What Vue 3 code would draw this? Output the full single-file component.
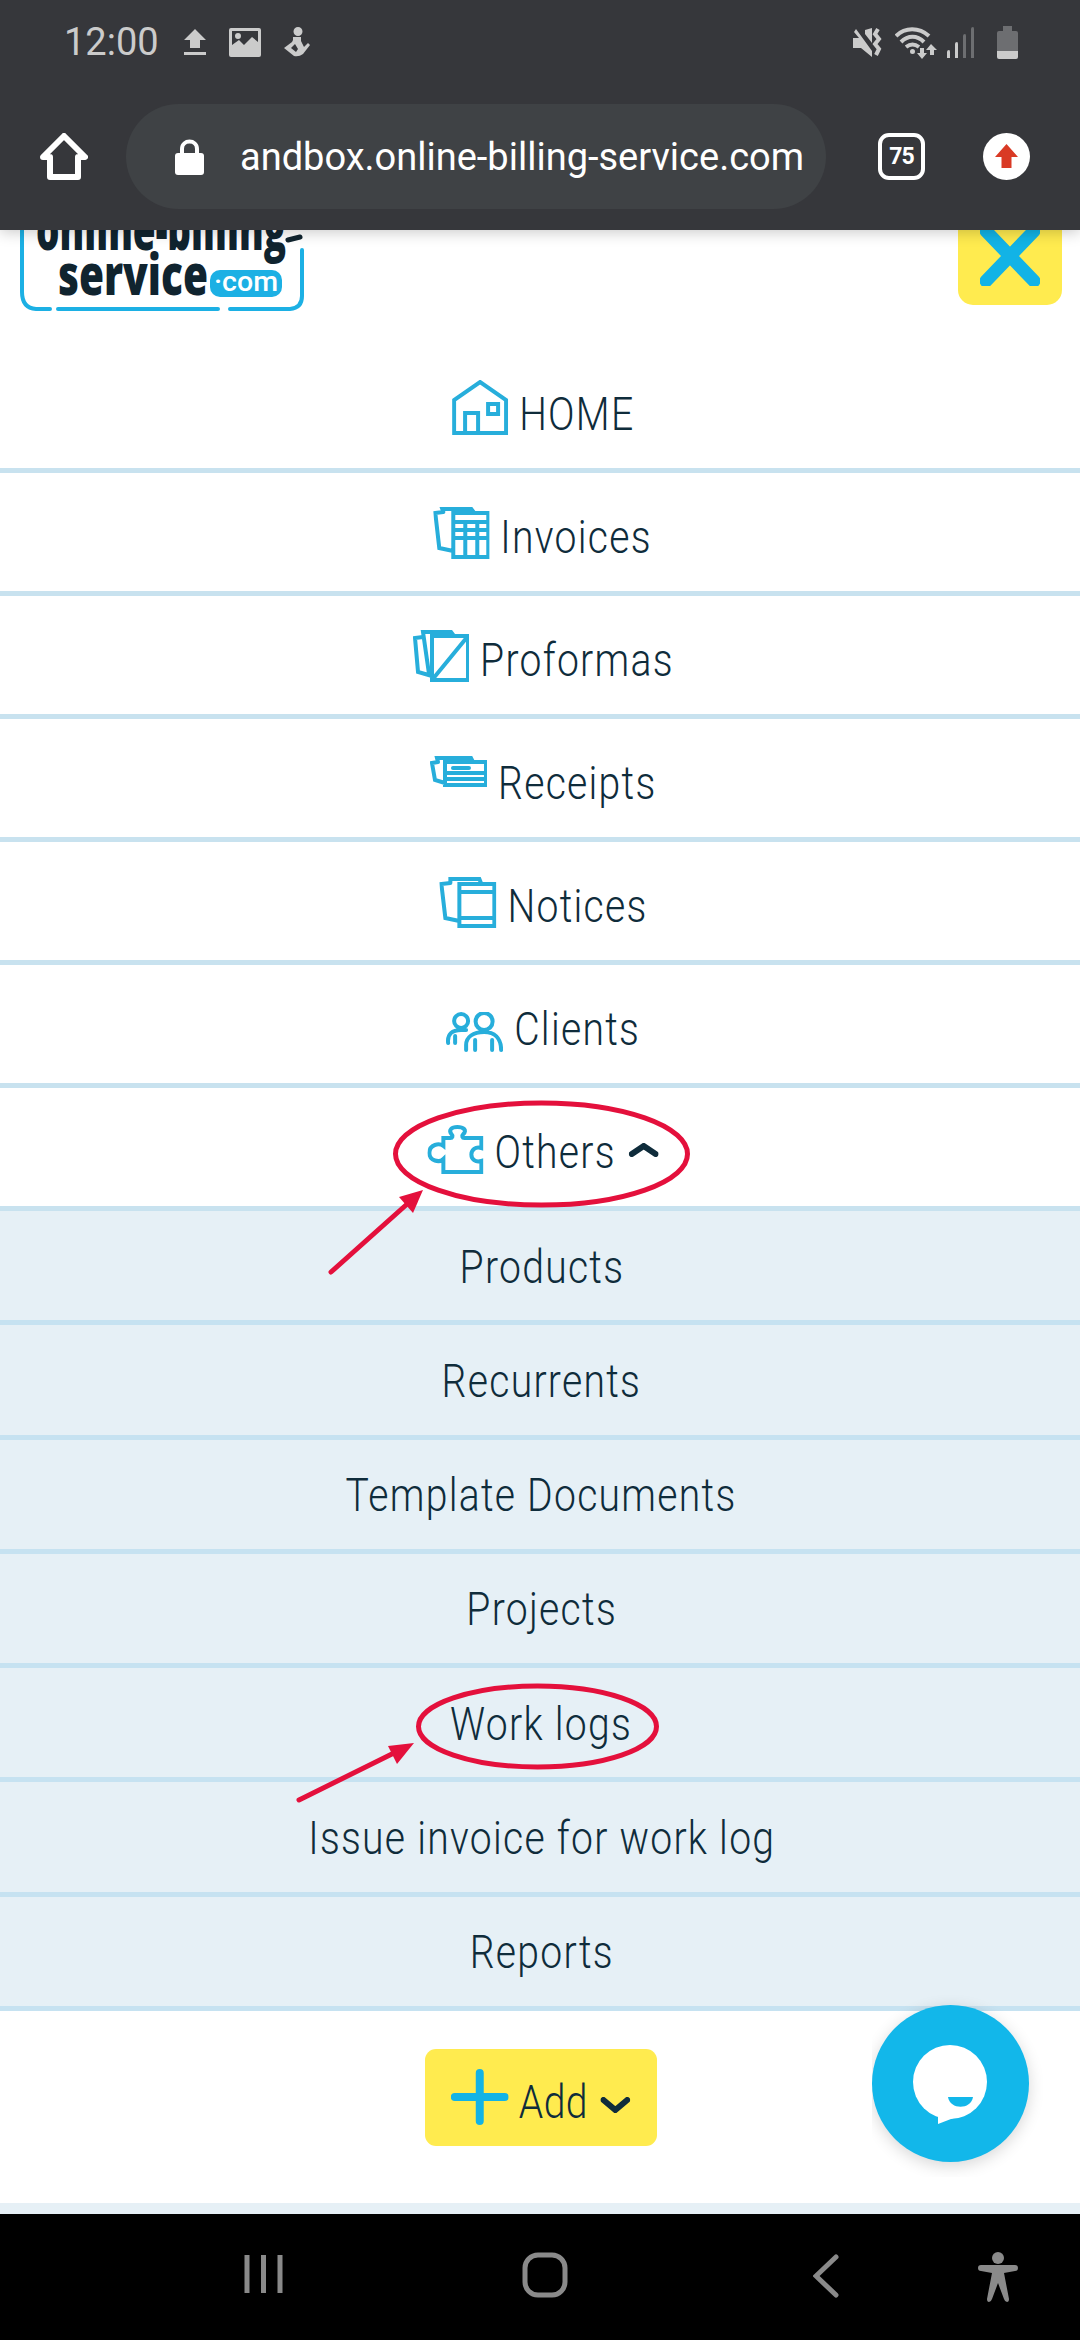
<template>
  <div class="page">
    <header class="browser">
      <div class="status">
        <span class="time">12:00</span>
        <svg class="st st-up" viewBox="0 0 22 26"><path d="M11 0 22 11H16V19H6V11H0ZM0 23H22V26H0Z" /></svg>
        <svg class="st st-img" viewBox="0 0 32 29">
          <path fill-rule="evenodd" d="M2 0H30Q32 0 32 2V27Q32 29 30 29H2Q0 29 0 27V2Q0 0 2 0ZM3 3V17L10 12 15 17 23 9 29 14V3ZM9 5A3 3 0 1 1 9 11 3 3 0 1 1 9 5Z" />
        </svg>
        <svg class="st st-fig" viewBox="0 0 27 30">
          <path d="M15 0A4.500 4.500 0 1 1 15 9 4.500 4.500 0 1 1 15 0ZM10 10H18V14L21 20 25 16 27 18 20 27Q16 30 11 29L1 21 9 15 10 13ZM8 21 13 25 15 22 12 17Z" />
        </svg>
        <span class="status-right">
          <svg class="st st-mute" viewBox="0 0 31 31">
            <path d="M1 11H7L2 5 4 2 20 24V30L9 21H1ZM13 3 20 1V16L13 7Z" />
            <path class="st-line" d="M26 2 23 7 27 12 23 17 27 22 24 28" />
          </svg>
          <svg class="st st-wifi" viewBox="0 0 42 33">
            <path class="st-line" d="M1 10C10 1 24 1 34 10M6 16C13 9 22 9 29 16M11 21C15 18 20 18 24 21" />
            <path d="M17.500 23A2.500 2.500 0 1 1 17.500 28 2.500 2.500 0 1 1 17.500 23ZM25 22H29V27H32L27 33 22 27H25ZM36 18 42 24H39V29H35V24H31Z" />
          </svg>
          <svg class="st st-sig" viewBox="0 0 28 31">
            <path d="M0 25Q0 23 2 23 3 23 3 25V31H0Z" />
            <path d="M8 17Q8 15 10 15 11 15 11 17V31H8Z" />
            <path class="dim" d="M16 9Q16 7 18 7 19 7 19 9V31H16Z" />
            <path class="dim" d="M24 2Q24 0 26 0 27 0 27 2V31H24Z" />
          </svg>
          <svg class="st st-bat" viewBox="0 0 21 33">
            <path class="dim" d="M6 0H15V5H19Q21 5 21 7V25H0V7Q0 5 2 5H6Z" />
            <path d="M0 25H21V31Q21 33 19 33H2Q0 33 0 31Z" />
          </svg>
        </span>
      </div>
      <div class="toolbar">
        <svg class="tb-home" viewBox="0 0 48 47">
          <path d="M24 3 45 24H38V44H10V24H3Z" />
        </svg>
        <div class="url">
          <svg class="lock" viewBox="0 0 29 36">
            <path class="lock-body" d="M3 14H26Q29 14 29 17V33Q29 36 26 36H3Q0 36 0 33V17Q0 14 3 14Z" />
            <path class="lock-loop" d="M7 15V10C7 0 22 0 22 10V15" />
          </svg>
          <span class="url-text">andbox.online-billing-service.com</span>
        </div>
        <div class="tabs">75</div>
        <svg class="update" viewBox="0 0 47 47">
          <circle cx="23.500" cy="23.500" r="23.500" fill="#fff" />
          <path d="M23.500 11 35 24H28.500V35H18.500V24H12Z" fill="#d93a25" />
        </svg>
      </div>
    </header>

    <div class="topbar">
      <svg class="logo" viewBox="0 0 290 91">
        <path class="logo-edge" d="M2 0V72Q2 88 16 89H30M38 89H198M210 89H270Q282 88 282 76V30" />
        <text x="16" y="30" textLength="250" lengthAdjust="spacingAndGlyphs" class="logo-a">online-billing</text>
        <path class="logo-dash" d="M268 20 280 17" />
        <text x="38" y="75" textLength="150" lengthAdjust="spacingAndGlyphs" class="logo-b">service</text>
        <rect x="190" y="50" width="72" height="27" rx="10" fill="#1cb0e4" />
        <text x="194" y="71" textLength="64" lengthAdjust="spacingAndGlyphs" class="logo-c">·com</text>
      </svg>
      <button class="close" type="button" aria-label="Close">
        <svg viewBox="0 0 60 60"><path d="M6 5 54 55M54 5 6 55" /></svg>
      </button>
    </div>

    <nav class="menu">
      <a v-for="item in mainItems" :key="item.label" class="row">
        <span class="squeeze">
          <svg
            class="row-icon"
            :viewBox="`0 0 ${item.w} ${item.h}`"
            preserveAspectRatio="none"
            :style="{ width: item.w / squeeze + 'px', height: item.h + 'px', marginTop: item.dy * 2 + 'px' }"
          >
            <path :d="item.d" />
          </svg>
          <span class="label">{{ item.label }}</span>
          <svg v-if="item.open" class="chev" viewBox="0 0 30 14" preserveAspectRatio="none">
            <path d="M3 11 15 3 27 11" />
          </svg>
        </span>
      </a>
      <div class="submenu">
        <a v-for="label in subItems" :key="label" class="sub-row">
          <span class="squeeze">{{ label }}</span>
        </a>
      </div>
    </nav>

    <div class="add-area">
      <button class="add" type="button">
        <span class="squeeze">
          <svg class="plus" viewBox="0 0 58 56" preserveAspectRatio="none"><path d="M4 28H54M29 4V52" /></svg>
          <span class="add-label">Add</span>
          <svg class="add-chev" viewBox="0 0 30 16" preserveAspectRatio="none"><path d="M3 3 15 13 27 3" /></svg>
        </span>
      </button>
    </div>
    <div class="strip"></div>

    <footer class="navbar">
      <svg class="nb nb-rec" viewBox="0 0 41 42"><path d="M4 2V40M20.500 2V40M37 2V40" /></svg>
      <svg class="nb nb-home" viewBox="0 0 46 46"><rect x="3" y="3" width="40" height="40" rx="13" /></svg>
      <svg class="nb nb-back" viewBox="0 0 26 44"><path d="M23 3 3 22 23 41" /></svg>
      <svg class="nb nb-person" viewBox="0 0 40 50">
        <circle cx="20" cy="6" r="6" />
        <path d="M3 13H37Q40 13 40 16 40 19 37 19L26 21 31 47Q31 50 29 50 27 50 26 47L20 31 14 47Q13 50 11 50 9 50 9 47L14 21 3 19Q0 19 0 16 0 13 3 13Z" />
      </svg>
    </footer>

    <div class="chat-clip">
      <button class="chat" type="button" aria-label="Chat">
        <svg viewBox="0 0 157 157">
          <circle cx="78" cy="77" r="37" fill="#fff" />
          <path d="M66 108V119L92 109Z" fill="#fff" />
          <path d="M76 92H101C99 105 78 105 76 92Z" fill="#12b7ea" />
        </svg>
      </button>
    </div>

    <!-- red marks drawn over the page -->
    <svg class="marks" viewBox="0 0 1080 2340">
      <ellipse cx="541.500" cy="1154" rx="146" ry="51" />
      <ellipse cx="537.500" cy="1726.500" rx="119" ry="40.500" />
      <path d="M331 1272 415 1197" />
      <path class="head" d="M423 1190 399 1197 413 1213Z" />
      <path d="M299 1800 400 1750" />
      <path class="head" d="M414 1743 388 1746 397 1764Z" />
    </svg>
  </div>
</template>

<script setup>
// labels are narrowed with scaleX because no condensed font is installed,
// icons get the inverse width so they come out at their real size
const squeeze = 0.85;

const mainItems = [
  {
    label: "HOME", w: 56, h: 55, dy: -2,
    d: "M2 53V20L28 2 54 20V53ZM13 53V33H26V53M36 24H46V34H36Z",
  },
  {
    label: "Invoices", w: 56, h: 52, dy: 1,
    d: "M20 52V6H55V50H20M20 15H55M20 23H55M20 31H55M32 15V50M44 15V50M20 44 6 41 2 6 10 5M10 5 9 2H38L41 6",
  },
  {
    label: "Proformas", w: 56, h: 52, dy: 1,
    d: "M19 50V6H55V50ZM19 50 55 6M19 46 5 42 2 8 10 7M16 44 10 2H38L41 6",
  },
  {
    label: "Receipts", w: 57, h: 31, dy: -7,
    d: "M15 29V6H56V29ZM15 17H56M15 23H56M23 12H39M15 27 5 24 2 7 8 6M8 6 7 2H41L43 6",
  },
  {
    label: "Notices", w: 57, h: 51, dy: 1,
    d: "M20 49V7H55V49ZM20 15H55M20 41H55M20 44 6 41 2 7 11 6M11 6 11 2H40L42 7",
  },
  {
    label: "Clients", w: 57, h: 40, dy: 8,
    d: "M38 1A8.500 8.500 0 1 1 38 18 8.500 8.500 0 1 1 38 1ZM15 2A7 7 0 1 1 15 16 7 7 0 1 1 15 2ZM20 38V33C20 25 27 20 38 20 48 20 55 26 55 38M29 28V38M46 28V38M2 31C1 22 6 18 15 18H20M9 24V31",
  },
  {
    label: "Others", w: 56, h: 49, dy: 2, open: true,
    d: "M16 47H54V36C48 38 44 34 44 29.500 44 25 48 21 54 23V13H37C35 13 34 11 36 9 40 5 36 2 30 2 24 2 21 5 24 9 26 11 25 13 23 13H16V21C12 18 2 19 2 28 2 36 12 38 16 34Z",
  },
];

const subItems = [
  "Products",
  "Recurrents",
  "Template Documents",
  "Projects",
  "Work logs",
  "Issue invoice for work log",
  "Reports",
];
</script>

<style>
html,
body {
  margin: 0;
  background: #fff;
}
</style>

<style scoped>
.page {
  position: relative;
  width: 1080px;
  height: 2340px;
  overflow: hidden;
  font-family: Roboto, "Liberation Sans", sans-serif;
  color: #0f2c3b;
  background: #fff;
}
.browser {
  position: relative;
  z-index: 2;
  height: 230px;
  box-sizing: border-box;
  background: #36373b;
  box-shadow: 0 2px 14px rgba(0, 0, 0, 0.22);
}
.status {
  display: flex;
  align-items: center;
  height: 104px;
  box-sizing: border-box;
  padding: 0 62px 20px 64px;
  color: #cbcbcb;
}
.time {
  font-size: 38px;
  line-height: 40px;
  width: 94px;
  margin-right: 26px;
}
.st {
  fill: #cbcbcb;
  flex: none;
}
.st-up {
  width: 22px;
  height: 26px;
  margin-right: 23px;
}
.st-img {
  width: 32px;
  height: 29px;
  margin-right: 22px;
}
.st-fig {
  width: 27px;
  height: 30px;
}
.status-right {
  margin-left: auto;
  display: flex;
  align-items: center;
}
.st-mute {
  width: 31px;
  height: 31px;
  margin-right: 12px;
}
.st-wifi {
  width: 42px;
  height: 33px;
  margin-right: 10px;
}
.st-sig {
  width: 28px;
  height: 31px;
  margin-right: 22px;
}
.st-bat {
  width: 21px;
  height: 33px;
}
.st-line {
  fill: none;
  stroke: #cbcbcb;
  stroke-width: 4;
}
.dim {
  fill: #6d6e71;
}
.toolbar {
  display: flex;
  align-items: center;
  height: 105px;
  padding-left: 40px;
}
.tb-home {
  width: 48px;
  height: 47px;
  margin-right: 38px;
  fill: none;
  stroke: #fff;
  stroke-width: 6;
  stroke-linejoin: round;
}
.url {
  display: flex;
  align-items: center;
  width: 700px;
  height: 105px;
  box-sizing: border-box;
  padding-left: 49px;
  border-radius: 53px;
  background: #3f4245;
}
.lock {
  width: 29px;
  height: 36px;
  margin-right: 36px;
  flex: none;
}
.lock-body {
  fill: #fff;
}
.lock-loop {
  fill: none;
  stroke: #fff;
  stroke-width: 4;
}
.url-text {
  color: #fff;
  font-size: 38px;
  white-space: nowrap;
}
.tabs {
  display: flex;
  align-items: center;
  justify-content: center;
  width: 47px;
  height: 47px;
  box-sizing: border-box;
  margin-left: 52px;
  border: 4px solid #fff;
  border-radius: 11px;
  color: #fff;
  font-size: 23px;
  font-weight: 700;
  letter-spacing: -1px;
}
.update {
  width: 47px;
  height: 47px;
  margin-left: 58px;
}
.topbar {
  display: flex;
  justify-content: space-between;
  align-items: flex-start;
  height: 120px;
  padding: 0 18px 0 20px;
}
.logo {
  width: 290px;
  height: 91px;
  margin-top: -10px;
  overflow: visible;
}
.logo-edge {
  fill: none;
  stroke: #1cb0e4;
  stroke-width: 4;
  stroke-linecap: round;
}
.logo-dash {
  fill: none;
  stroke: #10242f;
  stroke-width: 5;
  stroke-linecap: round;
}
.logo-a,
.logo-b {
  font-family: "Open Sans", sans-serif;
  font-weight: 800;
  fill: #10242f;
}
.logo-a {
  font-size: 58px;
}
.logo-b {
  font-size: 56px;
}
.logo-c {
  font-family: Roboto, sans-serif;
  font-size: 27px;
  font-weight: 500;
  fill: #fff;
}
.close {
  display: flex;
  align-items: center;
  justify-content: center;
  width: 104px;
  height: 96px;
  margin-top: -21px;
  padding: 0;
  border: 0;
  border-radius: 15px;
  background: #ffeb4f;
}
.close svg {
  width: 60px;
  height: 60px;
  margin-top: -2px;
  fill: none;
  stroke: #12b3e6;
  stroke-width: 13;
  stroke-linecap: round;
}
.squeeze {
  display: inline-flex;
  align-items: center;
  white-space: nowrap;
  transform: scaleX(0.85);
  font-size: 46px;
  font-weight: 300;
  line-height: 54px;
  letter-spacing: 1.5px;
}
.row {
  display: flex;
  align-items: center;
  justify-content: center;
  height: 118px;
  padding-left: 6px;
  border-bottom: 5px solid #c8e2ef;
}
.row-icon {
  flex: none;
  margin-right: 13px;
  fill: none;
  stroke: #27aedb;
  stroke-width: 4;
  stroke-linecap: round;
}
.label {
  margin-top: 10px;
}
.chev {
  width: 35px;
  height: 14px;
  margin: 6px 0 0 15px;
  fill: none;
  stroke: #0f2c3b;
  stroke-width: 6;
  stroke-linecap: round;
}
.submenu {
  background: #e6f0f6;
}
.sub-row {
  display: flex;
  align-items: center;
  justify-content: center;
  height: 109.290px;
  padding-left: 3px;
  border-bottom: 5px solid #c6e2f1;
}
.sub-row .squeeze {
  margin-top: 2px;
}
.add-area {
  display: flex;
  justify-content: center;
  align-items: flex-start;
  height: 192px;
  box-sizing: border-box;
  padding: 38px 0 0 1px;
}
.add {
  display: flex;
  align-items: center;
  justify-content: center;
  width: 232px;
  height: 97px;
  padding: 0;
  border: 0;
  border-radius: 11px;
  background: #ffeb4f;
  color: #0f2c3b;
  font-family: inherit;
}
.plus {
  width: 68px;
  height: 56px;
  fill: none;
  stroke: #12b3e6;
  stroke-width: 8;
  stroke-linecap: round;
}
.add-label {
  margin: 10px 0 0 12px;
  letter-spacing: 0.5px;
}
.add-chev {
  width: 35px;
  height: 16px;
  margin: 16px 0 0 15px;
  fill: none;
  stroke: #0f2c3b;
  stroke-width: 6;
  stroke-linecap: round;
}
.strip {
  height: 11px;
  background: #e6f0f6;
}
.navbar {
  display: block;
  position: relative;
  height: 126px;
  background: #000;
}
.nb {
  position: absolute;
}
.nb-rec {
  left: 243px;
  top: 39px;
  width: 41px;
  height: 42px;
  fill: none;
  stroke: #8a8a8a;
  stroke-width: 5;
}
.nb-home {
  left: 522px;
  top: 38px;
  width: 46px;
  height: 46px;
  fill: none;
  stroke: #8a8a8a;
  stroke-width: 5;
}
.nb-back {
  left: 813px;
  top: 40px;
  width: 26px;
  height: 44px;
  fill: none;
  stroke: #8a8a8a;
  stroke-width: 5;
  stroke-linecap: round;
}
.nb-person {
  left: 978px;
  top: 38px;
  width: 40px;
  height: 50px;
  fill: #8a8a8a;
}
.chat-clip {
  position: absolute;
  z-index: 1;
  left: 872px;
  top: 1990px;
  width: 190px;
  height: 187px;
  overflow: hidden;
}
.chat {
  position: absolute;
  left: 0;
  top: 15px;
  width: 157px;
  height: 157px;
  padding: 0;
  border: 0;
  border-radius: 50%;
  background: #12b7ea;
  box-shadow: 0 4px 16px rgba(0, 0, 0, 0.16);
}
.chat svg {
  display: block;
  width: 157px;
  height: 157px;
}
.marks {
  position: absolute;
  z-index: 1;
  left: 0;
  top: 0;
  width: 1080px;
  height: 2340px;
  pointer-events: none;
  fill: none;
  stroke: #e4103c;
  stroke-width: 5;
  stroke-linecap: round;
}
.marks .head {
  fill: #e4103c;
  stroke: none;
}
</style>
